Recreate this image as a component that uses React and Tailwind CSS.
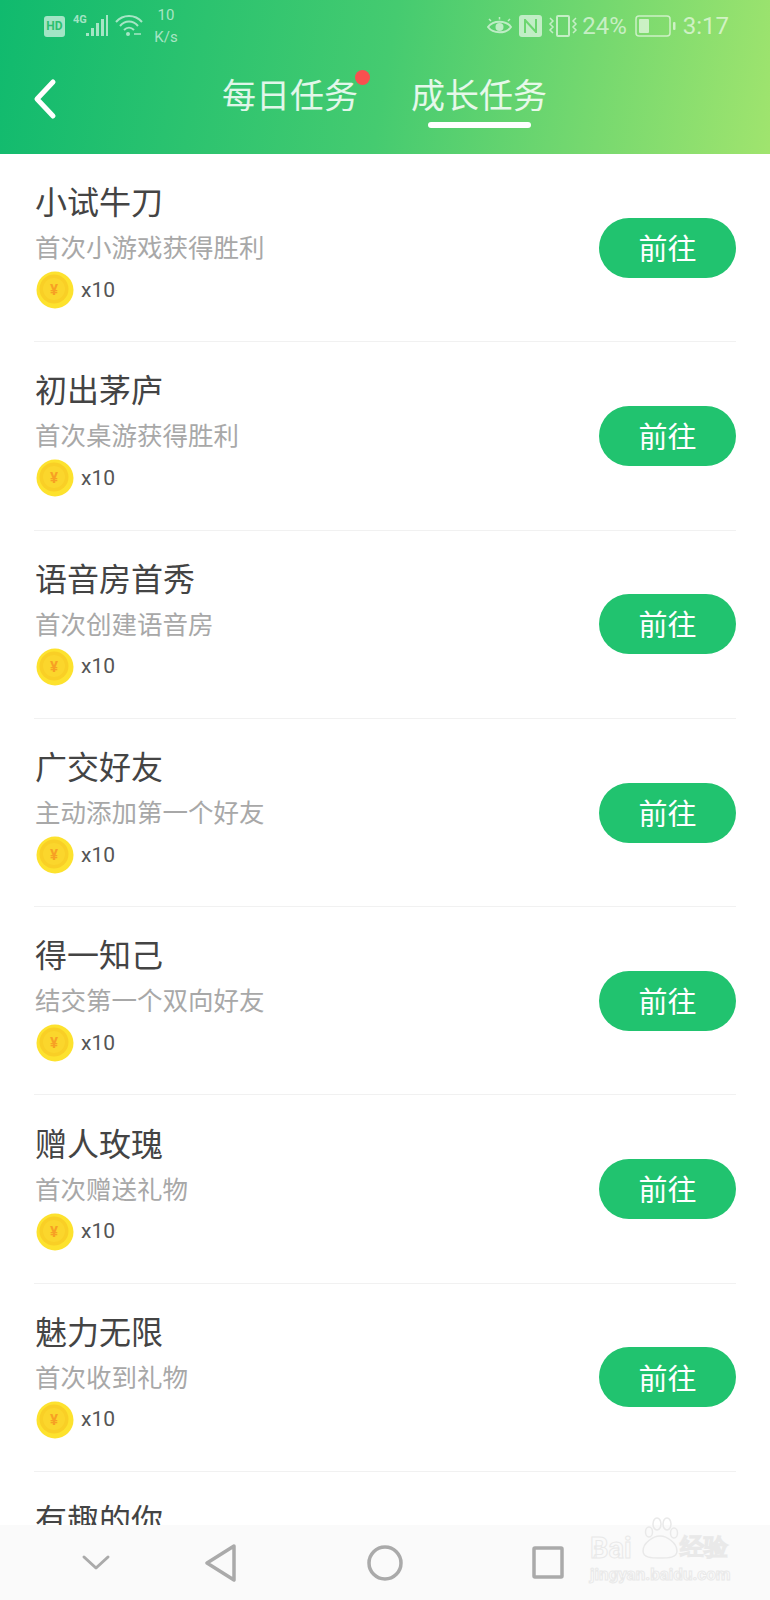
const FONT = { fontFamily: '"Noto Sans CJK SC", Roboto, sans-serif' }

const TASKS = [
  { title: '小试牛刀', desc: '首次小游戏获得胜利' },
  { title: '初出茅庐', desc: '首次桌游获得胜利' },
  { title: '语音房首秀', desc: '首次创建语音房' },
  { title: '广交好友', desc: '主动添加第一个好友' },
  { title: '得一知己', desc: '结交第一个双向好友' },
  { title: '赠人玫瑰', desc: '首次赠送礼物' },
  { title: '魅力无限', desc: '首次收到礼物' },
]

function Coin() {
  return (
    <svg width="38" height="38" viewBox="0 0 38 38" className="ml-[1px] shrink-0">
      <circle cx="19" cy="19" r="18.5" fill="#fde22e" />
      <circle cx="18" cy="18" r="14.5" fill="#f9cf26" />
      <circle cx="18" cy="18" r="11" fill="#fbd62c" />
      <text x="18" y="24" textAnchor="middle" fontSize="15" fontWeight="700" fill="#f7a024" fontFamily="Roboto, sans-serif">¥</text>
    </svg>
  )
}

function StatusBar() {
  return (
    <div className="flex h-[54px] items-center justify-between pb-[2px] pl-[44px] pr-[41px] text-white/60">
      <div className="flex items-center">
        <div className="flex h-[21px] w-[21px] items-center justify-center rounded-[3px] bg-white/60 text-[12px] font-bold leading-none text-[#2cc070]" style={{ fontFamily: 'Roboto, sans-serif' }}>HD</div>
        <svg width="36" height="26" viewBox="0 0 36 26" className="ml-[8px]">
          <text x="0" y="10" fontSize="11" fontWeight="700" fill="currentColor" fontFamily="Roboto, sans-serif">4G</text>
          <g fill="currentColor">
            <rect x="13" y="20" width="3" height="3" />
            <rect x="18" y="15" width="3" height="8" />
            <rect x="23" y="10" width="3" height="13" />
            <rect x="28" y="6" width="3" height="17" />
            <rect x="33" y="2" width="2" height="21" />
          </g>
        </svg>
        <svg width="28" height="24" viewBox="0 0 28 24" fill="none" stroke="currentColor" strokeWidth="2" className="ml-[6px]">
          <path d="M1 8 C8 0 20 0 27 8" />
          <path d="M5 12 C10 6 18 6 23 12" />
          <path d="M9 16 C12 13 16 13 19 16" />
          <circle cx="13" cy="20" r="2" fill="currentColor" stroke="none" />
          <path d="M19 20h7" strokeWidth="1.5" />
        </svg>
        <div className="ml-[10px] flex w-[26px] flex-col items-center text-[15px] leading-[22px]" style={{ fontFamily: 'Roboto, sans-serif' }}>
          <span>10</span>
          <span>K/s</span>
        </div>
      </div>
      <div className="flex items-center" style={{ fontFamily: 'Roboto, sans-serif' }}>
        <svg width="25" height="20" viewBox="0 0 25 20" fill="none" stroke="currentColor" strokeWidth="2">
          <path d="M1 11 C6 4 19 4 24 11 C19 18 6 18 1 11 Z" />
          <circle cx="12.5" cy="11" r="4" fill="currentColor" stroke="none" />
          <path d="M4 5 2 3M12.500 3.500V1M21 5l2-2" strokeWidth="1.500" />
        </svg>
        <svg width="23" height="22" viewBox="0 0 23 22" className="ml-[7px]">
          <rect width="23" height="22" rx="3" fill="currentColor" />
          <path d="M6 4v14M6 5l11 12M17 4v14" stroke="#6cd670" strokeWidth="2" fill="none" />
        </svg>
        <svg width="31" height="24" viewBox="0 0 31 24" fill="none" stroke="currentColor" strokeWidth="1.500" className="ml-[6px]">
          <rect x="9" y="2" width="12" height="20" rx="1" strokeWidth="2" />
          <path d="M2 4l3 3-3 3 3 3-3 3 3 3M28 4l-3 3 3 3-3 3 3 3-3 3" />
        </svg>
        <span className="ml-[3px] text-[24px] leading-none">24%</span>
        <svg width="41" height="22" viewBox="0 0 41 22" className="ml-[8px]">
          <rect x="1" y="1" width="34" height="20" rx="3" fill="none" stroke="currentColor" strokeWidth="1.500" />
          <rect x="4" y="4" width="10" height="14" rx="1" fill="currentColor" />
          <rect x="38" y="7" width="2.500" height="8" rx="1" fill="currentColor" />
        </svg>
        <span className="ml-[7px] text-[24px] leading-none">3:17</span>
      </div>
    </div>
  )
}

function Header() {
  return (
    <div className="h-[154px] shrink-0 bg-[linear-gradient(100deg,#10ba6e_0%,#45cb70_50%,#a0e46e_100%)]">
      <StatusBar />
      <div className="flex h-[100px] items-start">
        <svg width="34" height="46" viewBox="0 0 34 46" fill="none" stroke="white" strokeWidth="5" strokeLinecap="round" strokeLinejoin="round" className="ml-[29px] mt-[22px] shrink-0">
          <path d="M24 6 8 23l16 17" />
        </svg>
        <div className="ml-[159px] mt-[16px] flex w-[136px] flex-col items-center text-[34px] leading-[48px] text-white/85">
          <div className="relative whitespace-nowrap">
            每日任务
            <span className="absolute right-[-12px] top-[0px] h-[15px] w-[15px] rounded-full bg-[#f9504f]" />
          </div>
        </div>
        <div className="ml-[53px] mt-[16px] flex w-[136px] flex-col items-center text-[34px] leading-[48px] text-white/85">
          <div className="whitespace-nowrap">成长任务</div>
          <div className="mt-[4px] h-[6px] w-[103px] rounded-full bg-white" />
        </div>
      </div>
    </div>
  )
}

function TaskRow({ task }) {
  return (
    <div className="mx-[34px] flex h-[188.3px] items-center justify-between border-b border-[#f1f1f1]">
      <div className="mb-[7px] pl-[1px]">
        <div className="-mt-[2px] text-[32px] leading-[46px] text-[#444]">{task.title}</div>
        <div className="mt-[4px] text-[25.5px] leading-[37px] text-[#a8a8a8]">{task.desc}</div>
        <div className="mt-[7px] flex items-center">
          <Coin />
          <span className="ml-[7px] text-[21px] leading-none text-[#555]" style={{ fontFamily: 'Roboto, sans-serif' }}>x10</span>
        </div>
      </div>
      <div className="flex h-[60px] w-[137px] items-center justify-center rounded-full bg-[#21c36f] text-[29px] text-white">前往</div>
    </div>
  )
}

function Watermark() {
  return (
    <div className="mb-[26px] ml-[26px] flex h-[65px] w-[138px] flex-col text-transparent [-webkit-text-stroke:1px_#e9e9e9]" style={{ fontFamily: 'Roboto, sans-serif' }}>
      <div className="flex h-[44px] items-end">
        <span className="w-[50px] text-[29px] font-bold leading-[26px]">Bai</span>
        <svg width="40" height="44" viewBox="0 0 40 44" fill="none" stroke="#e9e9e9" strokeWidth="1.500">
          <ellipse cx="9" cy="15" rx="3.500" ry="5" />
          <ellipse cx="17" cy="7" rx="4" ry="6" />
          <ellipse cx="27" cy="7" rx="4" ry="6" />
          <ellipse cx="34" cy="16" rx="3.500" ry="5" />
          <path d="M3 34c0-8 10-15 17-15s17 7 17 15c0 7-9 7-17 7S3 41 3 34Z" />
        </svg>
        <span className="text-[24px] font-bold leading-[28px]">经验</span>
      </div>
      <div className="mt-[5px] whitespace-nowrap text-[17px] font-bold leading-[16px]">jingyan.baidu.com</div>
    </div>
  )
}

function BottomNav() {
  return (
    <div className="flex h-[75px] shrink-0 items-center bg-[#fafafa]">
      <svg width="30" height="20" viewBox="0 0 30 20" fill="none" stroke="#aaa" strokeWidth="3" strokeLinecap="round" strokeLinejoin="round" className="ml-[81px]">
        <path d="M3 4 15 15 27 4" />
      </svg>
      <svg width="34" height="38" viewBox="0 0 34 38" fill="none" stroke="#aaa" strokeWidth="3.500" strokeLinejoin="round" className="ml-[92px]">
        <path d="M31 2 4 19l27 17Z" />
      </svg>
      <svg width="36" height="36" viewBox="0 0 36 36" fill="none" stroke="#aaa" strokeWidth="3.500" className="ml-[130px]">
        <circle cx="18" cy="18" r="16" />
      </svg>
      <svg width="32" height="33" viewBox="0 0 32 33" fill="none" stroke="#aaa" strokeWidth="3.500" strokeLinejoin="round" className="ml-[129px]">
        <rect x="2" y="2" width="28" height="29" rx="1" />
      </svg>
      <Watermark />
    </div>
  )
}

export default function App() {
  return (
    <div className="flex h-[1600px] w-[770px] flex-col overflow-hidden bg-white" style={FONT}>
      <Header />
      <div className="min-h-0 flex-1 overflow-hidden">
        {TASKS.map((t) => (
          <TaskRow key={t.title} task={t} />
        ))}
        <div className="mx-[34px] pl-[1px] pt-[23px] text-[32px] leading-[46px] text-[#444]">有趣的你</div>
      </div>
      <BottomNav />
    </div>
  )
}
